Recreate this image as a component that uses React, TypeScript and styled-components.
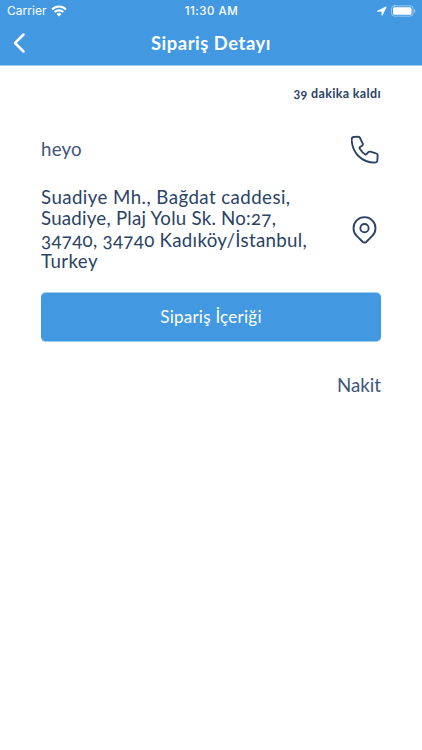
import React from "react";
import styled, { createGlobalStyle } from "styled-components";

const navy = "#2a4365";
const softNavy = "#40557a";
const blue = "#4299e1";
const edge = "#a0ccf0";

const GlobalStyle = createGlobalStyle`
  * { box-sizing: border-box; }
  body { margin: 0; background: #fff; }
`;

const Screen = styled.main`
  height: 750px;
  overflow: hidden;
  background: #fff;
  color: ${navy};
  font-family: Lato, sans-serif;
  font-variant-numeric: oldstyle-nums;
`;

const Header = styled.header`
  height: 66px;
  background: ${blue};
  border-bottom: 1px solid ${edge};
  color: #fff;
`;

const StatusBar = styled.div`
  height: 22px;
  display: grid;
  grid-template-columns: 1fr auto 1fr;
  align-items: center;
  padding: 0 6px 0 7px;
  font-family: Inter, sans-serif;
  font-size: 12px;
  line-height: 22px;
  font-variant-numeric: normal;
`;

const Carrier = styled.div`
  display: flex;
  align-items: center;
  gap: 4px;
  letter-spacing: 0.05px;
`;

const Clock = styled.div`
  font-weight: 500;
  font-size: 11.5px;
  letter-spacing: 0.5px;
`;

const Indicators = styled.div`
  display: flex;
  align-items: center;
  justify-content: flex-end;
  gap: 4px;
`;

const NavBar = styled.div`
  height: 42px;
  display: grid;
  grid-template-columns: 60px 1fr 60px;
  align-items: center;
`;

const BackButton = styled.button`
  border: 0;
  background: none;
  color: inherit;
  padding: 0 0 0 12px;
  display: flex;
`;

const Title = styled.h1`
  margin: 0;
  text-align: center;
  font-size: 18.4px;
  line-height: 22px;
  font-weight: 700;
  letter-spacing: 0.54px;
`;

const Content = styled.section`
  padding: 20px 41px 0;
  display: flex;
  flex-direction: column;
`;

const Remaining = styled.div`
  text-align: right;
  font-size: 12.5px;
  line-height: 16px;
  font-weight: 700;
  letter-spacing: 0.35px;
`;

const InfoRow = styled.div<{ $height: number; $top: number }>`
  display: flex;
  align-items: center;
  justify-content: space-between;
  height: ${(p) => p.$height}px;
  margin-top: ${(p) => p.$top}px;
`;

const Line = styled.div<{ $spacing: number; $soft?: boolean }>`
  font-size: 18.7px;
  line-height: 21.5px;
  white-space: nowrap;
  color: ${(p) => (p.$soft ? softNavy : navy)};
  letter-spacing: ${(p) => p.$spacing}px;
`;

const ContentsButton = styled.button`
  height: 50px;
  margin-top: 19px;
  border: 0 solid ${edge};
  border-width: 1px 0;
  border-radius: 5px;
  background: ${blue};
  color: #fff;
  font: 400 17px/22px Lato, sans-serif;
  letter-spacing: 0.24px;
`;

const Payment = styled.div`
  margin-top: 31px;
  text-align: right;
  font-size: 18.7px;
  line-height: 24px;
  color: ${softNavy};
`;

const Icon = styled.svg`
  display: block;
  flex: none;
  fill: none;
  stroke: currentColor;
  stroke-linecap: round;
  stroke-linejoin: round;
`;

const address = [
  { text: "Suadiye Mh., Bağdat caddesi,", spacing: 0.43 },
  { text: "Suadiye, Plaj Yolu Sk. No:27,", spacing: 0.23 },
  { text: "34740, 34740 Kadıköy/İstanbul,", spacing: 0.3 },
  { text: "Turkey", spacing: 0.4 },
];

export default function App() {
  return (
    <>
      <GlobalStyle />
      <Screen>
        <Header>
          <StatusBar>
            <Carrier>
              Carrier
              <Icon width="16" height="12" viewBox="0 0 16 12">
                <path
                  d="M1.1 4.4a9.8 9.8 0 0 1 13.8 0M3.7 7.1a6.1 6.1 0 0 1 8.6 0"
                  strokeWidth="2.1"
                  strokeLinecap="butt"
                />
                <path d="M8 11.4 5.6 9a3.4 3.4 0 0 1 4.8 0z" fill="currentColor" stroke="none" />
              </Icon>
            </Carrier>
            <Clock>11:30 AM</Clock>
            <Indicators>
              <Icon width="10" height="10" viewBox="0 0 11 11">
                <path d="M.8 5.6 10 1 5.7 10.2 5.3 5.9z" fill="currentColor" strokeWidth="1" />
              </Icon>
              <Icon width="25" height="12" viewBox="0 0 25 12">
                <rect x=".5" y=".8" width="21.5" height="10.4" rx="3" strokeOpacity=".45" />
                <rect x="2" y="2.2" width="18.5" height="7.6" rx="1.6" fill="currentColor" stroke="none" />
                <path d="M23.2 4v4a2.2 2.2 0 0 0 0-4" fill="currentColor" fillOpacity=".5" stroke="none" />
              </Icon>
            </Indicators>
          </StatusBar>
          <NavBar>
            <BackButton aria-label="Geri">
              <Icon width="14" height="22" viewBox="0 0 14 22" strokeWidth="2.5">
                <path d="M11.5 2.5 3 11l8.5 8.5" />
              </Icon>
            </BackButton>
            <Title>Sipariş Detayı</Title>
          </NavBar>
        </Header>
        <Content>
          <Remaining>39 dakika kaldı</Remaining>
          <InfoRow $height={34} $top={31}>
            <Line $spacing={0.2} $soft>heyo</Line>
            <Icon width="30" height="30" viewBox="19 14 90 90" strokeWidth="5.6">
              <path d="M27 20 41 19Q45 19 46 23L54 39Q56 43 52 46L46 50Q43 52 46 56Q53 67 61 72Q65 74 67 70L70 66Q73 63 77 64L94 69Q99 70 99 75L98 91Q97 97 90 97Q62 97 41 77Q23 58 21 30Q20 21 27 20Z" />
            </Icon>
          </InfoRow>
          <InfoRow $height={86} $top={19.5}>
            <div>
              {address.map((line) => (
                <Line key={line.text} $spacing={line.spacing}>{line.text}</Line>
              ))}
            </div>
            <Icon width="33" height="33" viewBox="0 0 24 24" strokeWidth="1.35">
              <path d="M17.657 16.657L13.414 20.9a1.998 1.998 0 01-2.827 0l-4.244-4.243a8 8 0 1111.314 0z" />
              <circle cx="12" cy="11" r="3" />
            </Icon>
          </InfoRow>
          <ContentsButton>Sipariş İçeriği</ContentsButton>
          <Payment>Nakit</Payment>
        </Content>
      </Screen>
    </>
  );
}
